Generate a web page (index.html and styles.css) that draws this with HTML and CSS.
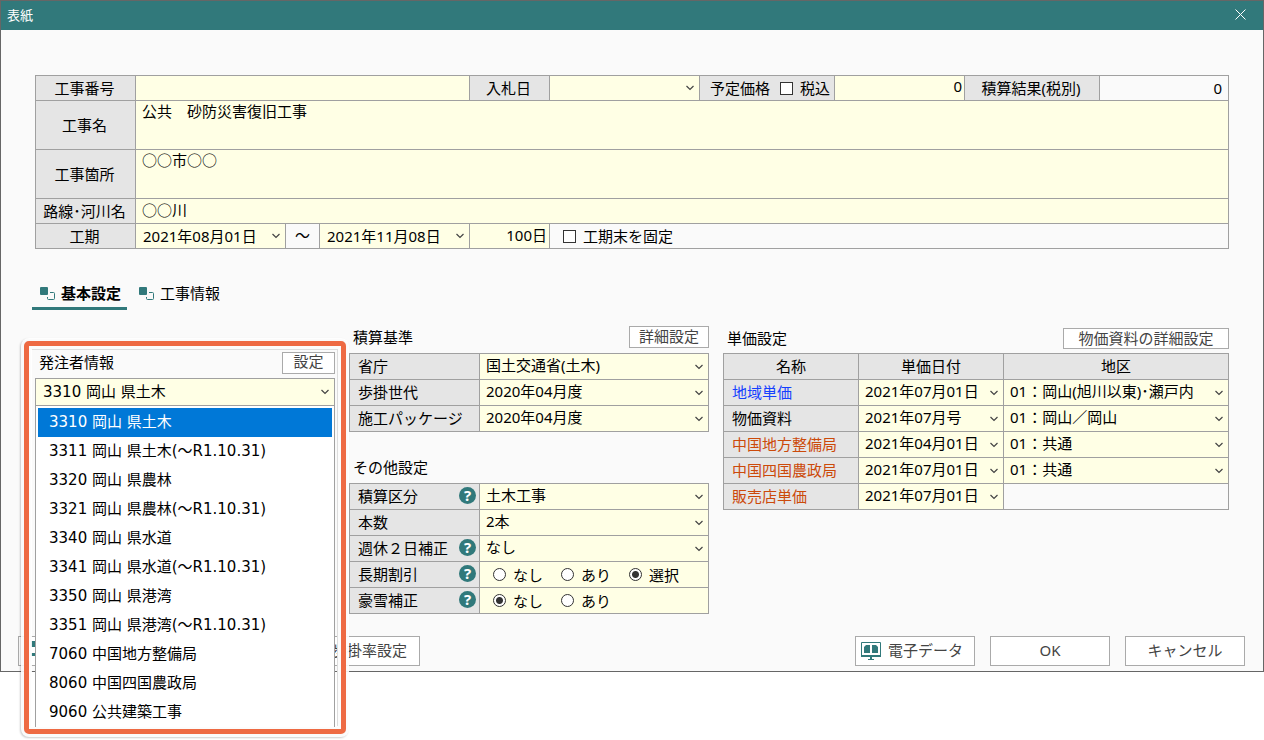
FILE: index.html
```
<!DOCTYPE html>
<html lang="ja">
<head>
<meta charset="UTF-8" />
<meta name="viewport" content="width=device-width, initial-scale=1" />
<title>表紙</title>
<link rel="stylesheet" href="styles.css">
</head>
<body>

<div class="dialog" role="dialog" aria-labelledby="dialogTitle">
  <header class="titlebar">
    <h1 id="dialogTitle">表紙</h1>
    <button type="button" class="close" aria-label="閉じる">
      <svg width="11" height="11" viewBox="0 0 11 11"><path d="M.5.5l10 10M10.5.5l-10 10" stroke="#fff" fill="none" /></svg>
    </button>
  </header>

  <main class="content">
    <!-- 工事概要 -->
    <form class="summary">
      <div class="row row-number">
        <label class="name" for="koujiNo">工事番号</label>
        <input type="text" id="koujiNo">
        <label class="name" for="nyusatsu">入札日</label>
        <select id="nyusatsu"><option></option></select>
        <div class="name price">
          <label for="yotei">予定価格</label>
          <label class="check"><input type="checkbox">税込</label>
        </div>
        <input type="text" class="num" id="yotei" value="0">
        <label class="name" for="kekka">積算結果(税別)</label>
        <output class="result" id="kekka">0</output>
      </div>
      <div class="row row-text tall">
        <label class="name" for="koujiMei">工事名</label>
        <textarea id="koujiMei">公共　砂防災害復旧工事</textarea>
      </div>
      <div class="row row-text tall">
        <label class="name" for="kasho">工事箇所</label>
        <textarea id="kasho">○○市○○</textarea>
      </div>
      <div class="row row-text">
        <label class="name" for="rosen">路線･河川名</label>
        <input type="text" id="rosen" value="○○川">
      </div>
      <div class="row row-period">
        <label class="name" for="kaishi">工期</label>
        <select id="kaishi"><option>2021年08月01日</option></select>
        <span class="plain tilde">～</span>
        <select id="shuryo" aria-label="工期末"><option>2021年11月08日</option></select>
        <input type="text" class="num" aria-label="日数" value="100日">
        <label class="plain check fixed"><input type="checkbox">工期末を固定</label>
      </div>
    </form>

    <div class="tabs" role="tablist">
      <button type="button" class="tab active" role="tab" aria-selected="true">
        <svg width="15" height="14" viewBox="0 0 15 14"><rect width="8" height="8" rx="1" fill="#31797b" /><path d="M10 5.5h3.5a1 1 0 0 1 1 1v5a1 1 0 0 1-1 1h-5a1 1 0 0 1-1-1V10" fill="none" stroke="#31797b" /></svg>
        基本設定
      </button>
      <button type="button" class="tab" role="tab" aria-selected="false">
        <svg width="15" height="14" viewBox="0 0 15 14"><rect width="8" height="8" rx="1" fill="#31797b" /><path d="M10 5.5h3.5a1 1 0 0 1 1 1v5a1 1 0 0 1-1 1h-5a1 1 0 0 1-1-1V10" fill="none" stroke="#31797b" /></svg>
        工事情報
      </button>
    </div>

    <div class="panels">
      <!-- 発注者情報 -->
      <section class="panel client">
        <div class="panel-head">
          <h2><label for="hatchusha">発注者情報</label></h2>
          <button type="button" class="btn small">設定</button>
        </div>
        <select id="hatchusha" class="client-select"><option>3310 岡山 県土木</option></select>
        <ul class="client-list" role="listbox" aria-label="発注者">
          <li role="option" aria-selected="true">3310 岡山 県土木</li>
          <li role="option">3311 岡山 県土木(～R1.10.31)</li>
          <li role="option">3320 岡山 県農林</li>
          <li role="option">3321 岡山 県農林(～R1.10.31)</li>
          <li role="option">3340 岡山 県水道</li>
          <li role="option">3341 岡山 県水道(～R1.10.31)</li>
          <li role="option">3350 岡山 県港湾</li>
          <li role="option">3351 岡山 県港湾(～R1.10.31)</li>
          <li role="option">7060 中国地方整備局</li>
          <li role="option">8060 中国四国農政局</li>
          <li role="option">9060 公共建築工事</li>
        </ul>
        <div class="callout"></div>
      </section>

      <div class="panel">
        <section>
          <div class="panel-head">
            <h2>積算基準</h2>
            <button type="button" class="btn small">詳細設定</button>
          </div>
          <div class="settings">
            <label class="key" for="shocho">省庁</label>
            <select id="shocho"><option>国土交通省(土木)</option></select>
            <label class="key" for="sedai">歩掛世代</label>
            <select id="sedai"><option>2020年04月度</option></select>
            <label class="key" for="package">施工パッケージ</label>
            <select id="package"><option>2020年04月度</option></select>
          </div>
        </section>

        <section class="others">
          <div class="panel-head">
            <h2>その他設定</h2>
          </div>
          <div class="settings">
            <div class="key"><label for="kubun">積算区分</label><button type="button" class="help" aria-label="ヘルプ">?</button></div>
            <select id="kubun"><option>土木工事</option></select>
            <label class="key" for="honsu">本数</label>
            <select id="honsu"><option>2本</option></select>
            <div class="key"><label for="shukyu">週休２日補正</label><button type="button" class="help" aria-label="ヘルプ">?</button></div>
            <select id="shukyu"><option>なし</option></select>
            <div class="key"><span id="choki">長期割引</span><button type="button" class="help" aria-label="ヘルプ">?</button></div>
            <div class="radios" role="radiogroup" aria-labelledby="choki">
              <label><input type="radio" name="choki">なし</label>
              <label><input type="radio" name="choki">あり</label>
              <label><input type="radio" name="choki" checked>選択</label>
            </div>
            <div class="key"><span id="gosetsu">豪雪補正</span><button type="button" class="help" aria-label="ヘルプ">?</button></div>
            <div class="radios" role="radiogroup" aria-labelledby="gosetsu">
              <label><input type="radio" name="gosetsu" checked>なし</label>
              <label><input type="radio" name="gosetsu">あり</label>
            </div>
          </div>
        </section>
      </div>

      <!-- 単価設定 -->
      <section class="panel">
        <div class="panel-head low">
          <h2>単価設定</h2>
          <button type="button" class="btn small wide">物価資料の詳細設定</button>
        </div>
        <table class="prices">
          <thead>
            <tr><th class="col-name">名称</th><th class="col-date">単価日付</th><th>地区</th></tr>
          </thead>
          <tbody>
            <tr>
              <th class="blue">地域単価</th>
              <td><select aria-label="地域単価 日付"><option>2021年07月01日</option></select></td>
              <td><select aria-label="地域単価 地区"><option>01：岡山(旭川以東)･瀬戸内</option></select></td>
            </tr>
            <tr>
              <th>物価資料</th>
              <td><select aria-label="物価資料 日付"><option>2021年07月号</option></select></td>
              <td><select aria-label="物価資料 地区"><option>01：岡山／岡山</option></select></td>
            </tr>
            <tr>
              <th class="orange">中国地方整備局</th>
              <td><select aria-label="中国地方整備局 日付"><option>2021年04月01日</option></select></td>
              <td><select aria-label="中国地方整備局 地区"><option>01：共通</option></select></td>
            </tr>
            <tr>
              <th class="orange">中国四国農政局</th>
              <td><select aria-label="中国四国農政局 日付"><option>2021年07月01日</option></select></td>
              <td><select aria-label="中国四国農政局 地区"><option>01：共通</option></select></td>
            </tr>
            <tr>
              <th class="orange">販売店単価</th>
              <td><select aria-label="販売店単価 日付"><option>2021年07月01日</option></select></td>
              <td></td>
            </tr>
          </tbody>
        </table>
      </section>
    </div>
  </main>

  <footer class="footer">
    <button type="button" class="btn icon-only" aria-label="データ">
      <svg width="20" height="18" viewBox="0 0 20 18"><path d="M0 0h20v15H0z" fill="#31797b" /><path d="M2 6h16v6H2z" fill="#fff" /></svg>
    </button>
    <button type="button" class="btn rate">歩掛率設定</button>
    <button type="button" class="btn push">
      <svg width="20" height="18" viewBox="0 0 20 18"><path d="M.5.5h19v14H.5z" fill="#fff" stroke="#31797b" /><path d="M0 13h20v2H0zM9 15h2v2H9zM7 17h6v1H7z" fill="#31797b" /><path d="M3 5l2-2h4v8H3zM11 3h4l2 2v6h-6z" fill="#31797b" /></svg>
      電子データ
    </button>
    <button type="button" class="btn">OK</button>
    <button type="button" class="btn">キャンセル</button>
  </footer>
</div>

</body>
</html>
```
FILE: styles.css
```
* { box-sizing: border-box; }

body {
  margin: 0;
  min-height: 100vh;
  background: #fff;
  color: #000;
  font: 15px/22px "Noto Sans", "Noto Sans CJK JP", sans-serif;
}

h1, h2 { margin: 0; font-weight: normal; }
h2 { font-size: 15px; line-height: 22px; }
button, input, select, textarea { font: inherit; color: inherit; margin: 0; }
button { padding: 0; }
svg { display: block; flex: none; }

.dialog {
  border: 1px solid #666;
  background: #fafafa;
}

.titlebar {
  display: flex;
  justify-content: space-between;
  align-items: center;
  height: 29px;
  padding: 0 17px 2px 6px;
  background: #31797b;
  color: #fff;
}
.titlebar h1 { font-size: 13px; line-height: 20px; }
.close { border: 0; background: none; }

.content { padding: 45px 34px 0; }

/* Campos */
input[type="text"], textarea, select {
  display: block;
  width: 100%;
  min-width: 0;
  height: 100%;
  border: 0;
  border-radius: 0;
  background-color: #ffffe5;
  outline: none;
  appearance: none;
}
input[type="text"], textarea { padding: 0 6px; resize: none; line-height: 21px; }
input[type="text"] { padding-bottom: 4px; }
select {
  padding: 0 18px 0 7px;
  background-image: url("data:image/svg+xml,%3Csvg xmlns='http://www.w3.org/2000/svg' width='8' height='6'%3E%3Cpath d='M.5 1l3.5 3.5L7.5 1' fill='none' stroke='%23444' stroke-width='1.2'/%3E%3C/svg%3E");
  background-repeat: no-repeat;
  background-position: right 5px center;
}

input[type="checkbox"], input[type="radio"] {
  flex: none;
  width: 13px;
  height: 13px;
  border: 1px solid #333;
  background: #fff;
  appearance: none;
}
input[type="radio"] { border-radius: 50%; }
input[type="radio"]:checked { background: radial-gradient(circle, #333 0 3px, #fff 4px); }

/* 工事概要 */
.summary {
  display: grid;
  gap: 1px;
  border: 1px solid #a0a0a0;
  background: #a0a0a0;
}
.row { display: grid; gap: 1px; grid-auto-rows: 24px; }
.tall { grid-auto-rows: 48px; }
.row-number { grid-template-columns: 99px 1fr 79px 149px 134px 129px 134px 128px; }
.row-text { grid-template-columns: 99px 1fr; }
.row-period { grid-template-columns: 99px 149px 33px 149px 79px 1fr; }
.name {
  display: flex;
  align-items: center;
  justify-content: center;
  padding: 0 2px 1px 0;
  background: #e5e5e5;
  white-space: nowrap;
}
.price { gap: 10px; padding: 0 0 0 6px; }
.check { display: flex; align-items: center; gap: 7px; }
.summary .num { padding: 0 2px 4px; text-align: right; }
.result { padding: 1px 6px 0; background: #fafafa; text-align: right; }
.plain { background: #fafafa; }
.tilde { text-align: center; }
.fixed { padding-left: 13px; }

/* タブ */
.tabs {
  display: flex;
  gap: 4px;
  margin: 31px 0 0 -3px;
}
.tab {
  display: flex;
  align-items: center;
  gap: 6px;
  height: 30px;
  padding: 0 6px 2px 8px;
  border: 0;
  border-bottom: 3px solid transparent;
  background: none;
}
.tab svg { margin-top: 2px; }
.tab.active { border-color: #31797b; font-weight: bold; }

/* 設定パネル */
.panels {
  display: grid;
  grid-template-columns: 300px 360px 1fr;
  gap: 14px;
  margin-top: 16px;
}
.panel-head {
  display: flex;
  justify-content: space-between;
  height: 27px;
  padding: 0 0 5px 4px;
}
.low { padding: 2px 0 4px 4px; }
.low h2 { line-height: 20px; }

.btn {
  display: flex;
  align-items: center;
  justify-content: center;
  gap: 7px;
  width: 120px;
  height: 30px;
  padding-bottom: 3px;
  border: 1px solid #aaa;
  background: #fff;
  color: #444;
  line-height: 20px;
  white-space: nowrap;
}
.small { width: 80px; height: 100%; padding-bottom: 2px; }
.wide { width: 166px; }

.settings {
  display: grid;
  grid-template-columns: 129px 1fr;
  grid-auto-rows: 25px;
  gap: 1px;
  border: 1px solid #a0a0a0;
  background: #a0a0a0;
}
.key {
  display: flex;
  align-items: center;
  justify-content: space-between;
  padding: 0 3px 2px 8px;
  background: #e5e5e5;
}
.settings select { padding: 0 18px 4px 6px; }
.others { margin-top: 24px; }
.help {
  width: 17px;
  height: 17px;
  border: 0;
  border-radius: 50%;
  background: #31797b;
  color: #fff;
  font-weight: bold;
  line-height: 17px;
}
.radios {
  display: flex;
  align-items: center;
  gap: 18px;
  padding-left: 13px;
  background: #ffffe5;
}
.radios label { display: flex; align-items: center; gap: 7px; }

/* 発注者情報 */
.client { position: relative; padding-top: 26px; font-family: "DejaVu Sans", "Noto Sans CJK JP", sans-serif; }
.client .panel-head { height: 26px; padding-bottom: 4px; }
.client .small { width: 53px; }
.client-select { height: 28px; border: 1px solid #a0a0a0; }
.client-list {
  position: absolute;
  z-index: 1;
  top: 80px;
  left: 0;
  right: 0;
  margin: 0;
  padding: 2px 2px 0;
  border: solid #a0a0a0;
  border-width: 0 1px;
  background: #fff;
  list-style: none;
}
.client-list li { padding: 0 11px; line-height: 29px; white-space: nowrap; }
.client-list li[aria-selected="true"] { background: #0078d7; color: #fff; }
.callout {
  position: absolute;
  top: 15px;
  left: -11px;
  right: -11px;
  height: 393px;
  border: 5px solid #ee6a43;
  border-radius: 5px;
  box-shadow: 0 0 0 3px rgba(255, 255, 255, .9), -1px 1px 2px 3px rgba(0, 0, 0, .2), inset 0 0 0 3px rgba(255, 255, 255, .9), inset -1px 1px 0 3px #ddd;
  pointer-events: none;
}

/* 単価設定 */
.prices {
  width: 100%;
  border-collapse: collapse;
  table-layout: fixed;
}
.prices th, .prices td {
  height: 26px;
  padding: 0;
  border: 1px solid #a0a0a0;
}
.prices th { padding-bottom: 2px; background: #e5e5e5; font-weight: normal; }
.prices tbody th { padding-left: 8px; text-align: left; }
.prices select { height: 25px; padding: 0 18px 3px 6px; }
.col-name { width: 135px; }
.col-date { width: 145px; }
.prices .blue { color: #1440ff; }
.prices .orange { color: #cc4a0a; }

.footer {
  display: flex;
  gap: 15px;
  margin-top: 22px;
  padding: 0 18px 5px 17px;
}
.icon-only { justify-content: flex-start; width: 255px; padding-left: 10px; }
.rate { width: 132px; justify-content: flex-end; padding-right: 12px; }
.push { justify-content: flex-start; margin-left: auto; padding-left: 5px; }
.push svg { margin-top: 3px; }
```
